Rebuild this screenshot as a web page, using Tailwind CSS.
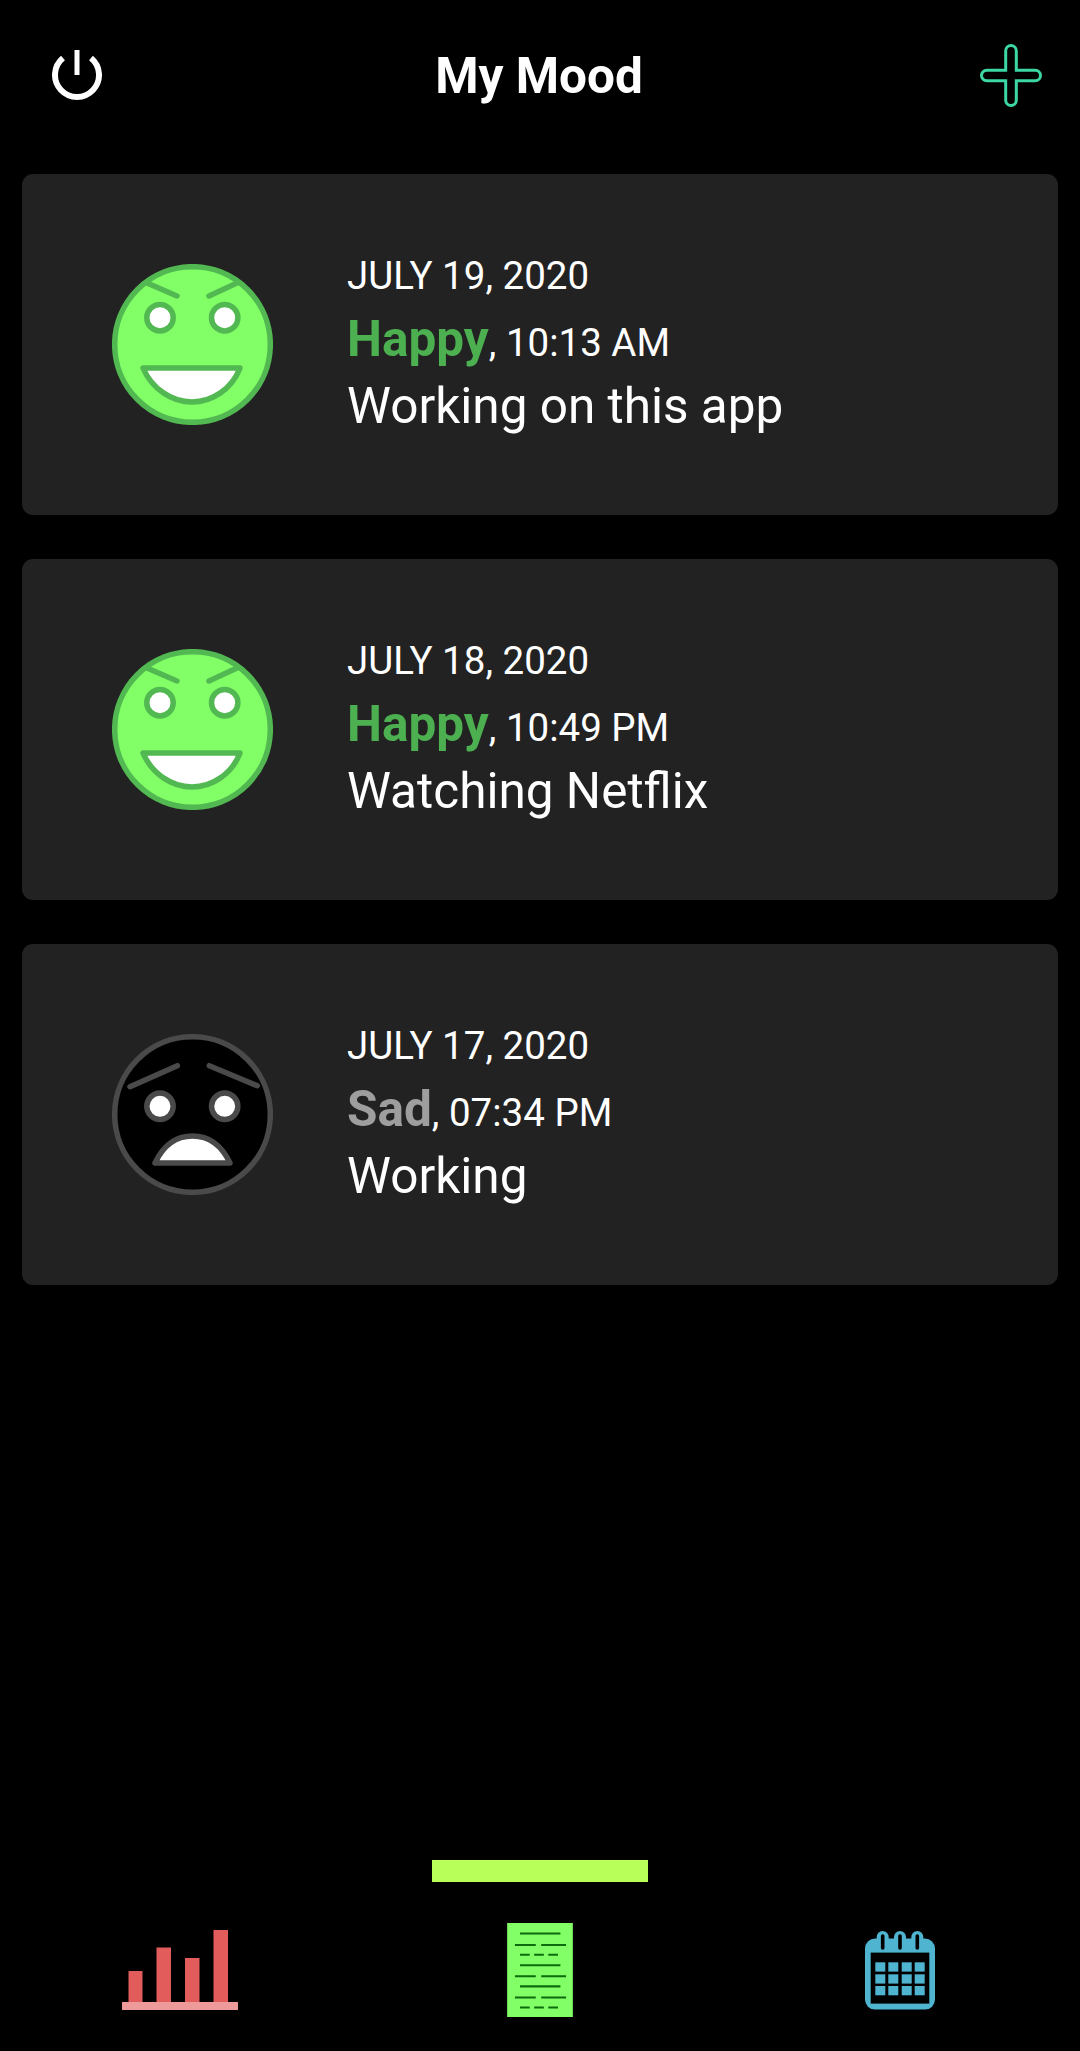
<!DOCTYPE html>
<html lang="en">
  <head>
    <meta charset="UTF-8" />
    <meta name="viewport" content="width=device-width, initial-scale=1.0" />
    <script src="https://cdn.jsdelivr.net/npm/@tailwindcss/browser@4"></script>
    <title>My Mood</title>
  </head>
  <body class="bg-black">
    <div class="flex flex-col h-[2051px] w-[1080px] bg-black text-white font-['Roboto',sans-serif]">
      <!-- header -->
      <header class="flex items-center justify-between h-[150px] pl-[52px] pr-[38px]">
        <svg class="w-[50px] h-[50px]" viewBox="0 0 50 50" fill="none" stroke="#fff">
          <path d="M11 8A22 22 0 1 0 39 8" stroke-width="6" />
          <path d="M25 0V25" stroke-width="5" />
        </svg>
        <h1 class="text-[49.5px] leading-none font-bold mr-[4px] pt-[3px]">My Mood</h1>
        <svg class="w-[62px] h-[63px]" viewBox="0 0 62 63" fill="none" stroke="#3dd6a5" stroke-width="3">
          <path d="M25.7 6.8a5.3 5.3 0 0 1 10.6 0V26.2H55.2a5.3 5.3 0 0 1 0 10.6H36.3V56.2a5.3 5.3 0 0 1-10.6 0V36.8H6.8a5.3 5.3 0 0 1 0-10.6H25.7Z" />
        </svg>
      </header>

      <!-- mood list -->
      <main class="flex flex-col gap-[44px] px-[22px] mt-[24px]">
        <div class="flex items-center h-[341px] pl-[90px] gap-[74px] rounded-[11px] bg-[#222222]">
          <svg class="w-[161px] h-[161px]" viewBox="0 0 161 161" stroke="#52b952" stroke-width="5.5" stroke-linecap="round">
            <circle cx="80.5" cy="80.5" r="77.8" fill="#82ff66" />
            <path d="M35 19L65 32M97 32L125 19" fill="none" />
            <circle cx="48" cy="53.7" r="13.2" fill="#fff" />
            <circle cx="112.7" cy="53.7" r="13.2" fill="#fff" />
            <path d="M31 104H128C120 125 100 138 80 138C60 138 40 125 31 104Z" fill="#fff" stroke-linejoin="round" />
          </svg>
          <div class="flex flex-col pb-[8px]">
            <p class="text-[38.5px] leading-[66px]">JULY 19, 2020</p>
            <p class="text-[38.5px] leading-[60px]"><span class="text-[49.5px] font-bold text-[#4caf50]">Happy</span>, 10:13 AM</p>
            <p class="text-[49.5px] leading-[66px]">Working on this app</p>
          </div>
        </div>

        <div class="flex items-center h-[341px] pl-[90px] gap-[74px] rounded-[11px] bg-[#222222]">
          <svg class="w-[161px] h-[161px]" viewBox="0 0 161 161" stroke="#52b952" stroke-width="5.5" stroke-linecap="round">
            <circle cx="80.5" cy="80.5" r="77.8" fill="#82ff66" />
            <path d="M35 19L65 32M97 32L125 19" fill="none" />
            <circle cx="48" cy="53.7" r="13.2" fill="#fff" />
            <circle cx="112.7" cy="53.7" r="13.2" fill="#fff" />
            <path d="M31 104H128C120 125 100 138 80 138C60 138 40 125 31 104Z" fill="#fff" stroke-linejoin="round" />
          </svg>
          <div class="flex flex-col pb-[8px]">
            <p class="text-[38.5px] leading-[66px]">JULY 18, 2020</p>
            <p class="text-[38.5px] leading-[60px]"><span class="text-[49.5px] font-bold text-[#4caf50]">Happy</span>, 10:49 PM</p>
            <p class="text-[49.5px] leading-[66px]">Watching Netflix</p>
          </div>
        </div>

        <div class="flex items-center h-[341px] pl-[90px] gap-[74px] rounded-[11px] bg-[#222222]">
          <svg class="w-[161px] h-[161px]" viewBox="0 0 161 161" stroke="#4a4a4a" stroke-width="5.5" stroke-linecap="round">
            <circle cx="80.5" cy="80.5" r="77.8" fill="#000" />
            <path d="M18 52.7L65.3 31.7M97.3 31.7L145.3 51.7" fill="none" />
            <circle cx="48" cy="72.3" r="13.2" fill="#fff" />
            <circle cx="112.7" cy="72.3" r="13.2" fill="#fff" />
            <path d="M43 129H118C110 112 98 102 80.5 102C63 102 51 112 43 129Z" fill="#fff" stroke-linejoin="round" />
          </svg>
          <div class="flex flex-col pb-[8px]">
            <p class="text-[38.5px] leading-[66px]">JULY 17, 2020</p>
            <p class="text-[38.5px] leading-[60px]"><span class="text-[49.5px] font-bold text-[#9e9e9e]">Sad</span>, 07:34 PM</p>
            <p class="text-[49.5px] leading-[66px]">Working</p>
          </div>
        </div>
      </main>

      <!-- bottom nav -->
      <footer class="mt-auto pb-[34px]">
        <div class="w-[216px] h-[22px] mx-auto mb-[41px] bg-[#b8ff5a]"></div>
        <nav class="grid grid-cols-3 justify-items-center items-center h-[94px]">
          <svg class="w-[116px] h-[80px]" viewBox="0 0 116 80">
            <g fill="#e25c5c">
              <rect x="6.5" y="41" width="14" height="31" />
              <rect x="34.5" y="17.5" width="14.5" height="54.5" />
              <rect x="63" y="28" width="14.5" height="44" />
              <rect x="91.5" y="0" width="14.5" height="72" />
            </g>
            <rect x="0" y="72" width="116" height="8" fill="#ef9a9a" />
          </svg>
          <svg class="w-[66px] h-[94px]" viewBox="0 0 65 93">
            <rect width="65" height="93" fill="#82ff66" />
            <path
              d="M12.7 10.3H52.7M7.7 21.7H28.3M33.7 21.7H58.3M12.7 31.3H22.3M26.7 31.3H36.3M40.7 31.3H50.3M12.7 41.7H52.7M7.7 52.7H28.3M33.7 52.7H58.3M12.7 62.7H52.7M7.7 73.7H28.3M33.7 73.7H58.3M12.7 83.7H22.3M26.7 83.7H36.3M40.7 83.7H50.3"
              stroke="#0c6b0c"
              stroke-width="2"
              fill="none"
            />
          </svg>
          <svg class="w-[70px] h-[79px]" viewBox="0 0 70 79">
            <g fill="#4fb4d0">
              <rect x="0" y="7.6" width="70" height="71" rx="10" />
              <rect x="11.7" y="0" width="12" height="20" rx="6" />
              <rect x="29" y="0" width="12" height="20" rx="6" />
              <rect x="46.3" y="0" width="12" height="20" rx="6" />
            </g>
            <g fill="#000">
              <rect x="15.9" y="3.3" width="3.6" height="15.4" rx="1.8" />
              <rect x="33.2" y="3.3" width="3.6" height="15.4" rx="1.8" />
              <rect x="50.5" y="3.3" width="3.6" height="15.4" rx="1.8" />
              <rect x="5.7" y="21.6" width="58.6" height="51" />
            </g>
            <g fill="#4fb4d0">
              <rect x="10.3" y="31.3" width="10" height="9.3" />
              <rect x="23.3" y="31.3" width="10" height="9.3" />
              <rect x="36.7" y="31.3" width="10" height="9.3" />
              <rect x="49.7" y="31.3" width="10" height="9.3" />
              <rect x="10.3" y="43.3" width="10" height="9.3" />
              <rect x="23.3" y="43.3" width="10" height="9.3" />
              <rect x="36.7" y="43.3" width="10" height="9.3" />
              <rect x="49.7" y="43.3" width="10" height="9.3" />
              <rect x="10.3" y="55" width="10" height="9.3" />
              <rect x="23.3" y="55" width="10" height="9.3" />
              <rect x="36.7" y="55" width="10" height="9.3" />
              <rect x="49.7" y="55" width="10" height="9.3" />
            </g>
          </svg>
        </nav>
      </footer>
    </div>
  </body>
</html>
